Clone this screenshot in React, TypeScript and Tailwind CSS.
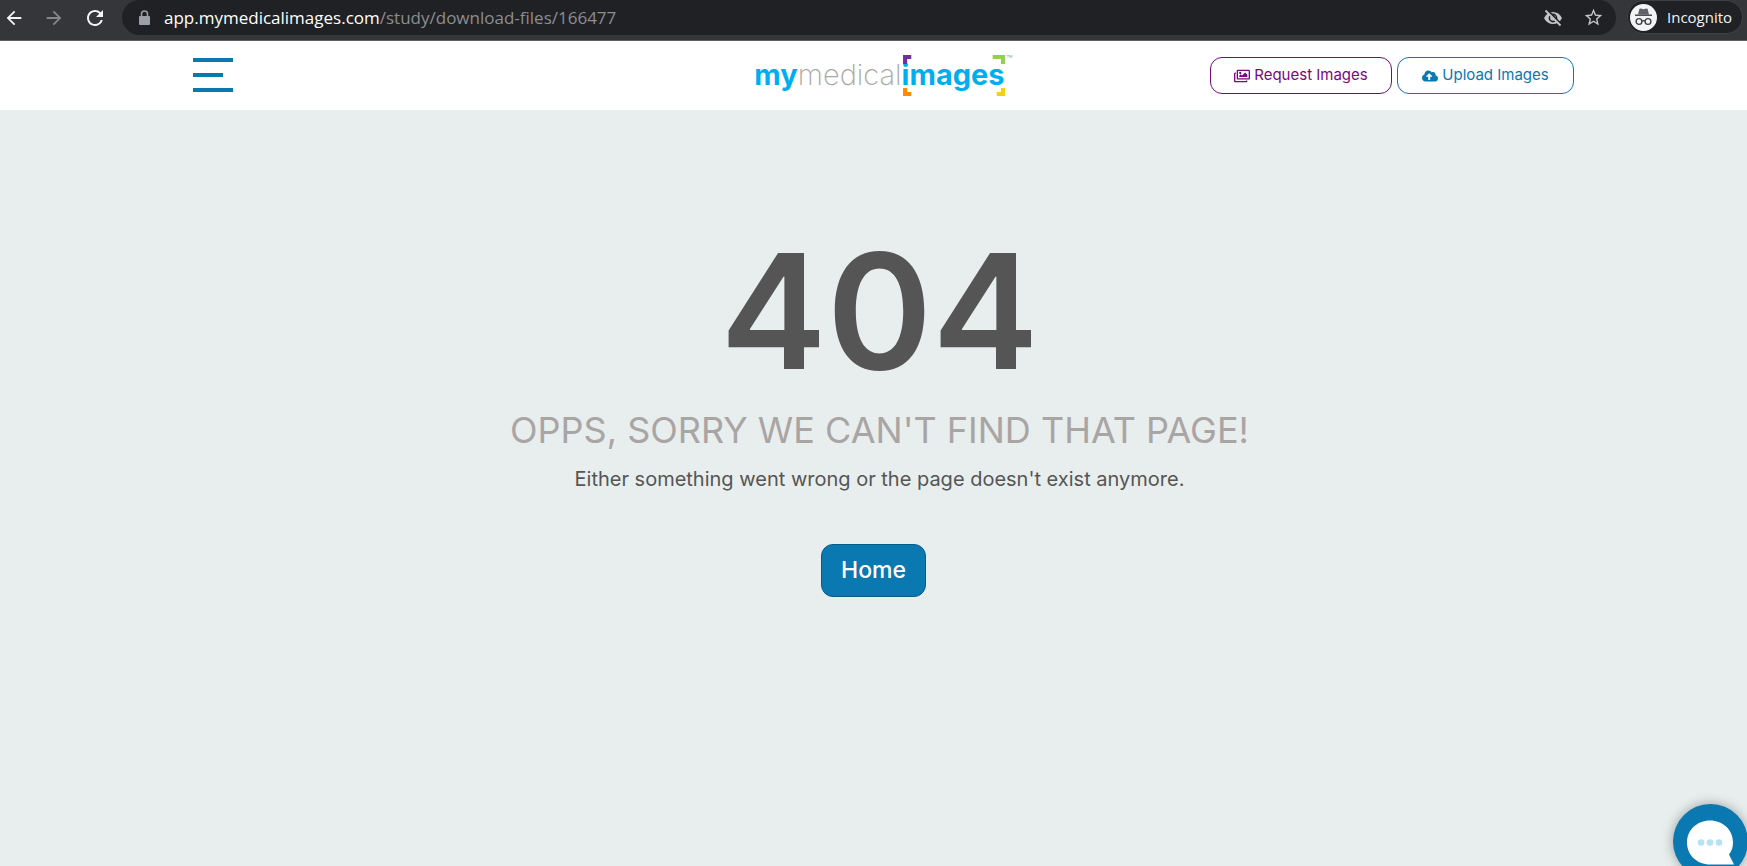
import React from 'react';
import { FaCloudUploadAlt, FaRegImages } from 'react-icons/fa';
import { MdArrowBack, MdArrowForward, MdLock, MdRefresh, MdStarOutline } from 'react-icons/md';

const BrowserBar = () => {
  return (
    <div className="flex h-[41px] items-start border-b border-[#5f6064] bg-[#35363a] font-['Open_Sans',sans-serif]">
      <div className="flex h-[35px] w-[122px] shrink-0 items-center gap-[18px] pl-[3px]">
        <button type="button" aria-label="Back" className="text-[22px] text-[#f1f3f4]">
          <MdArrowBack />
        </button>
        <button type="button" aria-label="Forward" className="text-[22px] text-[#85878a]">
          <MdArrowForward />
        </button>
        <button type="button" aria-label="Reload" className="text-[24px] text-[#f1f3f4]">
          <MdRefresh />
        </button>
      </div>
      <div className="flex h-[35px] flex-1 items-center rounded-full bg-[#202124] pr-3 pl-3.5">
        <LockIcon />
        <div className="flex-1 text-[17px] text-[#8b8e92]">
          <span className="text-white">app.mymedicalimages.com</span>/study/download-files/166477
        </div>
        <button type="button" aria-label="Third-party cookies blocked" className="mr-5 text-[#c3c5c8]">
          <EyeOffIcon />
        </button>
        <button type="button" aria-label="Bookmark" className="text-[21px] text-[#c3c5c8]">
          <MdStarOutline />
        </button>
      </div>
      <div className="mr-1 ml-[11px] flex h-[34px] w-[116px] items-center gap-2.5 rounded-full border border-[#3f4044] bg-[#202124] pl-0.5 text-[15px] text-[#f1f3f4]">
        <IncognitoIcon />
        Incognito
      </div>
    </div>
  );
};

const LockIcon = () => (
  <svg width="16" height="16" viewBox="0 0 16 16" fill="none" className="mr-3 text-[#9aa0a6]">
    <rect x="3" y="6" width="11" height="9" rx="1" fill="currentColor" />
    <path d="M5.500 6.500V4a3 3 0 0 1 6 0v2.500" stroke="currentColor" strokeWidth="1.500" />
  </svg>
);

const EyeOffIcon = () => (
  <svg width="20" height="20" viewBox="0 0 20 20" fill="none">
    <path d="M1 10C3 6 6.300 4 10 4s7 2 9 6c-2 4-5.300 6-9 6s-7-2-9-6z" fill="currentColor" />
    <circle cx="10" cy="10" r="3.600" stroke="#202124" strokeWidth="1.600" />
    <path d="M3.500 1.500l15 15" stroke="#202124" strokeWidth="2" />
    <path d="M2.500 2.500l15 15" stroke="currentColor" strokeWidth="1.800" />
  </svg>
);

const IncognitoIcon = () => (
  <svg width="27" height="27" viewBox="0 0 27 27" fill="none">
    <circle cx="13.500" cy="13.500" r="13.500" fill="#f1f3f4" />
    <path d="M9.300 5.300q.4-1 1.400-.7l2.800.6 2.800-.6q1-.3 1.400.7L19 10.500H8z" fill="#5f6368" />
    <path d="M5 10.500h17v1.400H5z" fill="#3c4043" />
    <circle cx="9" cy="17.500" r="2.900" stroke="#3c4043" strokeWidth="1.400" />
    <circle cx="18" cy="17.500" r="2.900" stroke="#3c4043" strokeWidth="1.400" />
    <path d="M11.800 17.200q1.700-1.200 3.400 0" stroke="#3c4043" strokeWidth="1.400" />
  </svg>
);

const Logo = () => {
  return (
    <a href="/" className="flex items-center text-[29px] leading-10 text-[#00aeef]">
      <span className="font-bold">my</span>
      <span className="font-extralight text-[#a8a8a8]">medical</span>
      <span className="relative font-bold">
        images
        <svg viewBox="0 0 100 42" className="absolute top-0 left-0 h-[42px] w-full" preserveAspectRatio="none">
          <path d="M1 0h8v4H5v5H1z" fill="#7030a0" />
          <path d="M92 0h8v9h-4V4h-8V0z" fill="#92d050" />
          <path d="M1 33h4v4h4v4H1z" fill="#ff8c00" />
          <path d="M96 33h4v8h-8v-4h4z" fill="#f5d010" />
        </svg>
      </span>
      <span className="self-start pl-0.5 text-[10px] leading-[8px] text-[#a8a8a8]">™</span>
    </a>
  );
};

const Header = () => {
  return (
    <header className="grid h-[69px] grid-cols-[1fr_auto_1fr] items-center bg-white pr-[173px] pb-0.5 pl-[193px]">
      <button type="button" aria-label="Menu" className="flex w-10 flex-col gap-[11px]">
        <span className="h-1 w-full bg-[#0a78b1]" />
        <span className="h-1 w-[30px] bg-[#0a78b1]" />
        <span className="h-1 w-full bg-[#0a78b1]" />
      </button>
      <Logo />
      <div className="flex justify-end gap-[5px] pt-0.5 text-[15px]">
        <button type="button" className="flex h-[37px] w-[182px] items-center justify-center gap-1 rounded-xl border border-[#78087c] text-[#78087c]">
          <FaRegImages className="size-4" />
          Request Images
        </button>
        <button type="button" className="flex h-[37px] w-[177px] items-center justify-center gap-1 rounded-xl border border-[#0a78b1] text-[#0a78b1]">
          <FaCloudUploadAlt className="size-4" />
          Upload Images
        </button>
      </div>
    </header>
  );
};

const NotFound = () => {
  return (
    <main className="flex flex-1 flex-col items-center pt-[121px]">
      <div className="pl-3 text-center">
        <h1 className="text-[160px] leading-[160px] font-semibold text-[#555]">404</h1>
        <h2 className="mt-4 text-[36px] leading-[46px] text-[#aaa5a5]">OPPS, SORRY WE CAN'T FIND THAT PAGE!</h2>
        <p className="mt-3 text-[20px] leading-7 text-[#555]">
          Either something went wrong or the page doesn't exist anymore.
        </p>
      </div>
      <a
        href="/"
        className="mt-[51px] flex h-[53px] w-[105px] items-center justify-center rounded-xl border border-[#085c88] bg-[#0a78b1] text-[23px] font-medium text-white"
      >
        Home
      </a>
    </main>
  );
};

const ChatButton = () => {
  return (
    <button
      type="button"
      aria-label="Open chat"
      className="fixed -right-px -bottom-[13px] size-[75px] rounded-full bg-[#0a78b1] shadow-[0_0_12px_rgba(0,0,0,0.35)]"
    >
      <svg viewBox="0 0 75 75" className="size-full">
        <path d="M37 16.500c13 0 23 9.500 23 22 0 5-1.500 9-4 12l5 10H37c-13 0-23-9.500-23-22s10-22 23-22z" fill="#fff" />
        <circle cx="28" cy="38.500" r="3.300" fill="#b5e3f3" />
        <circle cx="37" cy="38.500" r="3.300" fill="#b5e3f3" />
        <circle cx="46" cy="38.500" r="3.300" fill="#b5e3f3" />
      </svg>
    </button>
  );
};

const App = () => {
  return (
    <div className="flex min-h-screen flex-col overflow-hidden bg-[#e8eeee] font-[Inter,sans-serif]">
      <BrowserBar />
      <Header />
      <NotFound />
      <ChatButton />
    </div>
  );
};

export default App;
